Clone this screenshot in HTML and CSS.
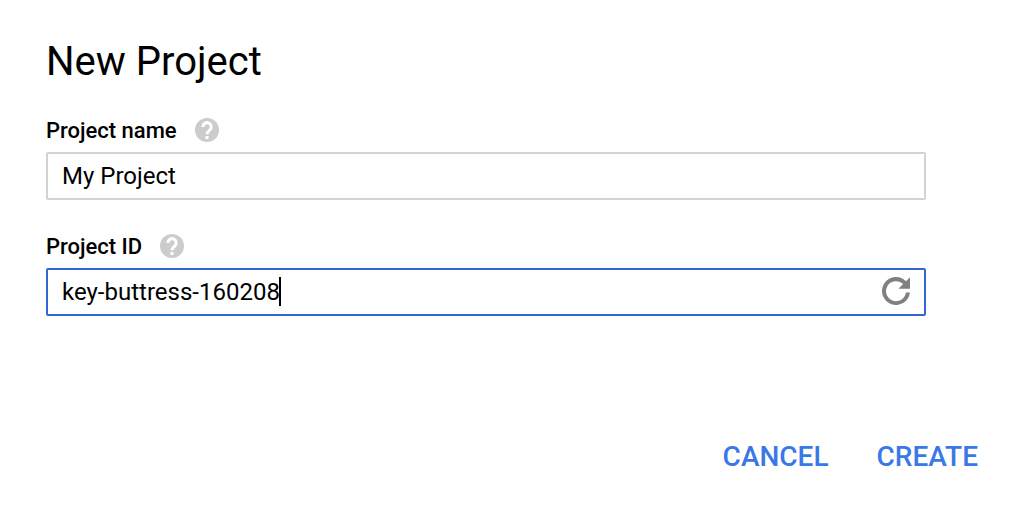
FILE: index.html
```html
<!DOCTYPE html>
<html lang="en">
	<head>
		<meta charset="UTF-8" />
		<meta name="viewport" content="width=device-width, initial-scale=1.0" />
		<title>New Project</title>
		<link rel="stylesheet" href="styles.css">
	</head>
	<body>
		<form action="" class="project-form">
			<h1 class="title">New Project</h1>
			<div class="field">
				<div class="field-header">
					<label for="project-name">Project name</label>
					<svg class="help-icon" viewBox="0 0 24 24" aria-hidden="true">
						<circle cx="12" cy="12" r="12" />
						<path d="M7.800 8.900a4.200 4.200 0 1 1 7.200 2.900c-1.700 1.600-2.900 2-2.900 4.500" />
						<rect x="10.500" y="18" width="3" height="3" />
					</svg>
				</div>
				<input type="text" id="project-name" class="text-input" value="My Project" />
			</div>
			<div class="field">
				<div class="field-header">
					<label for="project-id">Project ID</label>
					<svg class="help-icon" viewBox="0 0 24 24" aria-hidden="true">
						<circle cx="12" cy="12" r="12" />
						<path d="M7.800 8.900a4.200 4.200 0 1 1 7.200 2.900c-1.700 1.600-2.900 2-2.900 4.500" />
						<rect x="10.500" y="18" width="3" height="3" />
					</svg>
				</div>
				<div class="id-box">
					<input type="text" id="project-id" class="text-input active" value="key-buttress-160208" />
					<span class="caret"></span>
					<button type="button" class="refresh-btn" aria-label="Generate a new ID">
						<svg viewBox="0 0 28 28" aria-hidden="true">
							<path d="M24 4.200A14 14 0 1 0 27.900 15.500H23.900A10 10 0 1 1 21.100 7.100L16.500 11.700H28V.2z" />
						</svg>
					</button>
				</div>
			</div>
			<div class="actions">
				<button type="button" class="action-btn">CANCEL</button>
				<button type="submit" class="action-btn">CREATE</button>
			</div>
		</form>
	</body>
</html>
```
FILE: styles.css
```css
* {
	box-sizing: border-box;
}
body {
	margin: 0;
	background-color: #fff;
	color: #000;
	font-family: Roboto, Arial, sans-serif;
}
.project-form {
	padding: 36px 40px 32px 46px;
}
.title {
	margin: 0 0 28px;
	font-size: 40px;
	font-weight: 400;
	line-height: 52px;
}
.field {
	margin: 0 52px 32px 0;
}
.field-header {
	display: flex;
	align-items: center;
	gap: 18px;
	height: 28px;
	margin-bottom: 8px;
	font-size: 22px;
	font-weight: 500;
}
.help-icon {
	width: 24px;
	height: 24px;
	fill: #ccc;
}
.help-icon path {
	fill: none;
	stroke: #fff;
	stroke-width: 3;
}
.help-icon rect {
	fill: #fff;
}
.text-input {
	display: block;
	width: 100%;
	height: 48px;
	padding: 0 14px;
	border: 2px solid #d2d2d2;
	border-radius: 2px;
	outline: none;
	background-color: #fff;
	color: #000;
	font-family: inherit;
	font-size: 24px;
}
.text-input.active {
	border-color: #3367d6;
}
.id-box {
	position: relative;
}
.caret {
	position: absolute;
	top: 9px;
	left: 233px;
	width: 2px;
	height: 29px;
	background-color: #000;
}
.refresh-btn {
	position: absolute;
	top: 9px;
	right: 16px;
	width: 28px;
	height: 28px;
	padding: 0;
	border: none;
	background: none;
}
.refresh-btn svg {
	display: block;
	fill: #808080;
}
.actions {
	display: flex;
	justify-content: flex-end;
	gap: 48px;
	margin-top: 124px;
}
.action-btn {
	padding: 0;
	border: none;
	background: none;
	color: #3b78e7;
	font-family: inherit;
	font-size: 28px;
	font-weight: 500;
	line-height: 34px;
}
```
